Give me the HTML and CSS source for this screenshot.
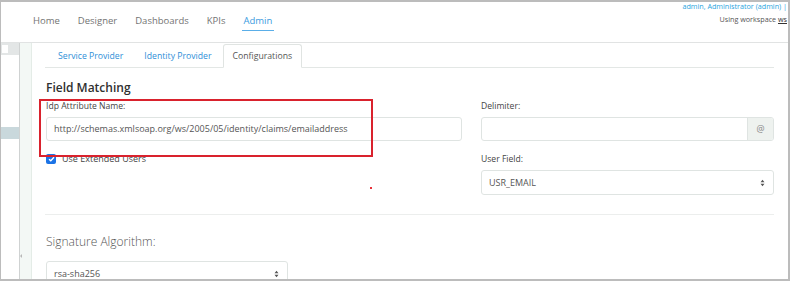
FILE: index.html
```html
<!DOCTYPE html>
<html>
<head>
<meta charset="utf-8">
<link rel="stylesheet" href="styles.css">
</head>
<body>
<div class="frame">
  <header class="topbar">
    <nav class="nav">
      <span class="nav-item">Home</span>
      <span class="nav-item">Designer</span>
      <span class="nav-item">Dashboards</span>
      <span class="nav-item">KPIs</span>
      <span class="nav-item active">Admin</span>
    </nav>
    <div class="user">
      <div class="user-line1">admin, Administrator (admin) |</div>
      <div class="user-line2">Using workspace <u>ws</u></div>
    </div>
  </header>
  <div class="body">
    <aside class="sidebar">
      <div class="side-row"><span class="side-box"></span></div>
      <div class="side-sel"></div>
    </aside>
    <div class="strip"><span class="handle"></span></div>
    <main class="content">
      <div class="tabs">
        <span class="tab">Service Provider</span>
        <span class="tab">Identity Provider</span>
        <span class="tab active">Configurations</span>
      </div>
      <h2 class="heading">Field Matching</h2>
      <div class="grid">
        <div class="col">
          <label class="label">Idp Attribute Name:</label>
          <div class="input">http://schemas.xmlsoap.org/ws/2005/05/identity/claims/emailaddress</div>
          <div class="check-row">
            <span class="checkbox"><svg width="7" height="6" viewBox="0 0 7 6"><path d="M1 3.2 L2.8 4.8 L6 1.2" fill="none" stroke="#fff" stroke-width="1.3"/></svg></span>
            <span class="check-label">Use Extended Users</span>
          </div>
        </div>
        <div class="col">
          <label class="label">Delimiter:</label>
          <div class="input group"><span class="grow"></span><span class="addon">@</span></div>
          <label class="label second">User Field:</label>
          <div class="input select">USR_EMAIL<svg class="arrows" width="5" height="8" viewBox="0 0 5 8"><path d="M0.5 3.2 L2.5 0.8 L4.5 3.2 Z M0.5 4.8 L2.5 7.2 L4.5 4.8 Z" fill="#555"/></svg></div>
        </div>
      </div>
      <hr class="rule">
      <div class="sig-label">Signature Algorithm:</div>
      <div class="input select sig">rsa-sha256<svg class="arrows" width="5" height="8" viewBox="0 0 5 8"><path d="M0.5 3.2 L2.5 0.8 L4.5 3.2 Z M0.5 4.8 L2.5 7.2 L4.5 4.8 Z" fill="#555"/></svg></div>
    </main>
  </div>
  <div class="annotation"></div>
  <div class="dot"></div>
</div>
</body>
</html>
```

FILE: styles.css
```css
* { box-sizing: border-box; }
html, body { margin: 0; padding: 0; background: #fff; }
body { font-family: "Open Sans", "Liberation Sans", sans-serif; color: #444; }

.frame {
  position: relative;
  width: 790px;
  height: 281px;
  overflow: hidden;
  border-style: solid;
  border-color: #bcbcbc;
  border-width: 2px 2px 2px 1px;
  display: flex;
  flex-direction: column;
}

.topbar {
  display: flex;
  height: 41px;
  flex: none;
  border-bottom: 1px solid #e1e3e3;
}
.nav {
  display: flex;
  gap: 14px;
  padding-left: 30px;
  padding-top: 12px;
  align-items: flex-start;
}
.nav-item {
  font-size: 9.5px;
  line-height: 14px;
  color: #737373;
  padding: 0 2px 2px;
  border-bottom: 1px solid transparent;
}
.nav-item.active {
  color: #3a9be0;
  border-bottom-color: #5aaee8;
}
.user {
  margin-left: auto;
  flex: none;
  white-space: nowrap;
  text-align: right;
  padding-right: 1px;
}
.user-line1 {
  font-size: 7.2px;
  line-height: 9px;
  color: #2aa5e0;
}
.user-line2 {
  font-size: 7.2px;
  line-height: 10px;
  color: #555;
  margin-top: 3px;
}
.user-line2 u { color: #333; }

.body {
  flex: 1;
  display: flex;
  min-height: 0;
}
.sidebar {
  width: 19px;
  flex: none;
  border-right: 1px solid #cfd2d2;
}
.side-row {
  height: 12px;
  background: #e3e6e6;
  padding: 2px 0 0 1px;
}
.side-box {
  display: block;
  width: 6px;
  height: 8px;
  background: #fff;
}
.side-sel {
  margin-top: 72px;
  height: 12px;
  background: #c9d8dc;
}
.strip {
  width: 12px;
  flex: none;
  background: #f3f8f5;
  border-right: 1px solid #e4ece7;
}
.handle {
  display: block;
  margin-top: 211px;
  width: 0;
  height: 0;
  border-top: 2px solid transparent;
  border-bottom: 2px solid transparent;
  border-right: 2px solid #b8b8b8;
}

.content {
  flex: 1;
  padding: 1px 14px 0 13px;
}
.tabs {
  display: flex;
  height: 24px;
  border-bottom: 1px solid #e3e7e5;
}
.tab {
  margin-left: 1px;
  padding: 0 9px;
  font-size: 8.7px;
  line-height: 22px;
  color: #2f8fd8;
  border: 1px solid transparent;
  border-radius: 3px 3px 0 0;
}
.tab:first-child { margin-left: 3px; }
.tab.active {
  color: #555;
  border-color: #e0e4e2;
  border-bottom-color: #fff;
  background: #fff;
  margin-bottom: -1px;
  height: 24px;
}

.heading {
  margin: 12px 0 0 1px;
  font-size: 12px;
  line-height: 16px;
  font-weight: 600;
  color: #2f2f2f;
}

.grid {
  display: grid;
  grid-template-columns: 416px 293px;
  column-gap: 19px;
  margin-top: 4px;
  padding-left: 1px;
}
.col { display: flex; flex-direction: column; }
.label {
  display: block;
  font-size: 8.6px;
  line-height: 13px;
  color: #444;
  margin-bottom: 4px;
}
.label.second { margin-top: 12px; }
.input {
  height: 24px;
  border: 1px solid #dfe4e2;
  border-radius: 3px;
  font-size: 9px;
  line-height: 22px;
  color: #555;
  padding-left: 7px;
  white-space: nowrap;
  overflow: hidden;
}
.input.group {
  display: flex;
  padding-left: 0;
}
.grow { flex: 1; }
.addon {
  width: 26px;
  flex: none;
  background: #eef2ef;
  border-left: 1px solid #dfe4e2;
  text-align: center;
  color: #888;
  font-size: 9px;
}
.input.select {
  height: 25px;
  line-height: 23px;
  display: flex;
  align-items: center;
  justify-content: space-between;
  padding-right: 8px;
}
.arrows { flex: none; }

.check-row {
  display: flex;
  align-items: center;
  margin-top: 12px;
  height: 11px;
}
.checkbox {
  width: 10px;
  height: 10px;
  border-radius: 2px;
  background: #1b73e6;
  display: flex;
  align-items: center;
  justify-content: center;
}
.check-label {
  margin-left: 6px;
  font-size: 9px;
  color: #444;
}

.rule {
  margin: 19px 0 0;
  border: 0;
  border-top: 1px solid #eceeed;
  height: 0;
}
.sig-label {
  margin: 19px 0 0 1px;
  font-size: 12px;
  line-height: 16px;
  font-weight: 300;
  color: #555;
}
.input.sig {
  margin: 11px 0 0 1px;
  width: 242px;
}

.annotation {
  position: absolute;
  left: 38px;
  top: 97px;
  width: 334px;
  height: 58px;
  border: 2px solid #d9222d;
}
.dot {
  position: absolute;
  left: 369px;
  top: 185px;
  width: 2px;
  height: 2px;
  background: #e8323a;
}
```
